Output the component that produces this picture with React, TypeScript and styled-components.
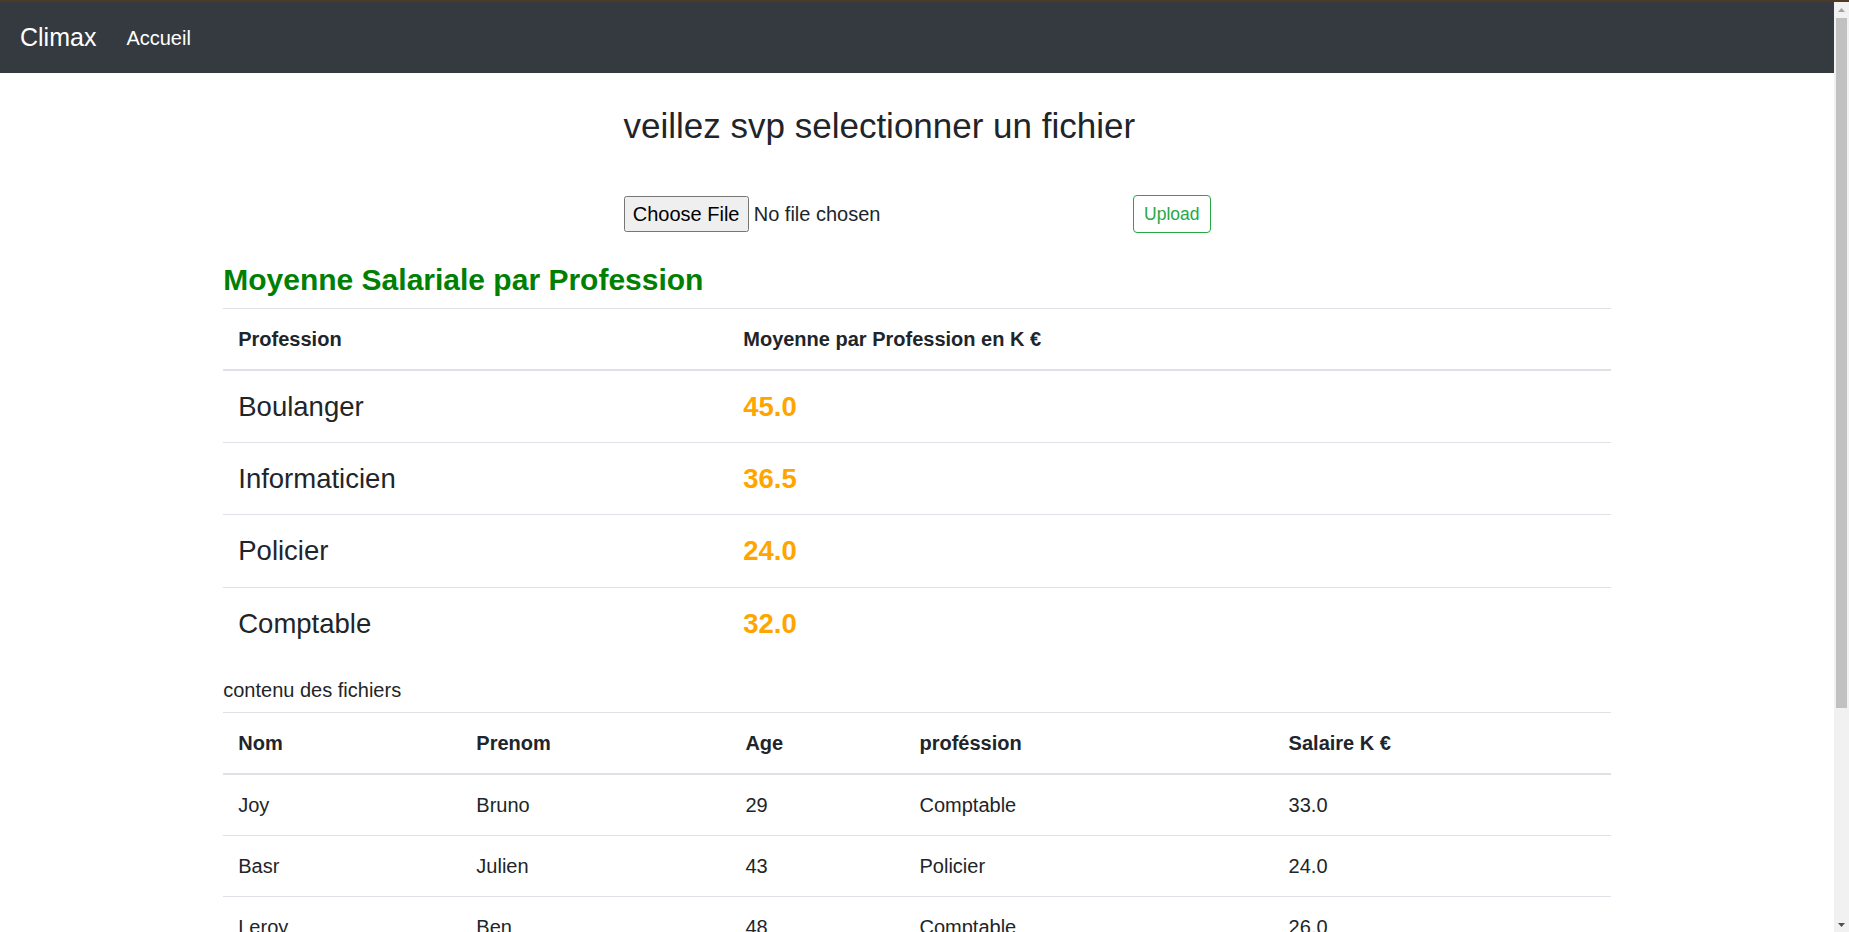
import React from "react";
import styled, { createGlobalStyle } from "styled-components";

const GlobalStyle = createGlobalStyle`
  html, body {
    margin: 0;
    padding: 0;
  }
  body {
    font-family: "Liberation Sans", Arial, sans-serif;
    font-size: 20px;
    line-height: 1.5;
    color: #212529;
    background: #ffffff;
  }
  *, *::before, *::after {
    box-sizing: border-box;
  }
`;

const TopStrip = styled.div`
  height: 2px;
  background: #4e3a24;
`;

const Frame = styled.div`
  display: grid;
  grid-template-columns: 1fr 15px;
  align-items: start;
`;

const Page = styled.div`
  min-width: 0;
`;

const ScrollRail = styled.div`
  position: sticky;
  top: 0;
  height: 930px;
  display: flex;
  flex-direction: column;
  align-items: center;
  background: #f1f1f1;
`;

const RailArrow = styled.div`
  display: flex;
  align-items: center;
  justify-content: center;
  width: 15px;
  height: 15px;
  flex: none;
`;

const RailTrack = styled.div`
  flex: 1;
  width: 100%;
  padding: 1px 2px 0;
`;

const RailThumb = styled.div`
  height: 690px;
  background: #c1c1c1;
`;

const NavBar = styled.nav`
  display: flex;
  align-items: center;
  padding: 10.5px 20px;
  background: #343a40;
`;

const Brand = styled.a`
  font-size: 25px;
  line-height: 37.5px;
  padding: 6.25px 0;
  margin-right: 20px;
  color: #ffffff;
  text-decoration: none;
`;

const NavLink = styled.a`
  padding: 10px;
  font-size: 20px;
  line-height: 30px;
  color: #ffffff;
  text-decoration: none;
`;

const Container = styled.main`
  max-width: 1425px;
  margin: 0 auto;
  padding: 0 18.75px;
`;

const UploadBlock = styled.section`
  width: 587px;
  margin: 31.5px auto 0;
`;

const PromptTitle = styled.h3`
  margin: 0 0 10px;
  font-size: 35px;
  font-weight: 500;
  line-height: 1.2;
`;

const UploadForm = styled.form`
  display: flex;
  align-items: center;
  margin-top: 48px;
`;

const FilePicker = styled.label`
  display: flex;
  align-items: center;
  width: 510px;
  cursor: pointer;
`;

const HiddenInput = styled.input`
  display: none;
`;

const ChooseButton = styled.span`
  display: inline-block;
  height: 36px;
  padding: 0 8.25px;
  line-height: 34px;
  font-size: 20px;
  color: #000000;
  background: #efefef;
  border: 1px solid #767676;
  border-radius: 2.5px;
`;

const FileName = styled.span`
  margin-left: 5px;
  font-size: 20px;
`;

const UploadButton = styled.button`
  font-family: inherit;
  font-size: 17.5px;
  line-height: 1.5;
  padding: 5px 10px;
  color: #28a745;
  background: transparent;
  border: 1px solid #28a745;
  border-radius: 4px;
  cursor: pointer;
`;

const SectionTitle = styled.h4`
  margin: 29px 0 10px;
  font-size: 30px;
  font-weight: 700;
  line-height: 1.2;
  color: #008000;
`;

const DataTable = styled.table<{ $gap: number }>`
  width: 100%;
  border-collapse: collapse;
  margin-bottom: ${(p) => p.$gap}px;
`;

const HeadCell = styled.th`
  padding: 15px;
  text-align: left;
  vertical-align: bottom;
  font-size: 20px;
  line-height: 30px;
  font-weight: 700;
  border-top: 1px solid #dee2e6;
  border-bottom: 2px solid #dee2e6;
`;

const Cell = styled.td<{ $size: number; $accent?: boolean }>`
  padding: 15px;
  vertical-align: top;
  font-size: ${(p) => p.$size}px;
  line-height: 1.5;
  font-weight: ${(p) => (p.$accent ? 700 : 400)};
  color: ${(p) => (p.$accent ? "#ffa500" : "#212529")};
  border-top: 1px solid #dee2e6;
`;

const FilesLabel = styled.p`
  margin: 0 0 7px;
  font-size: 20px;
  line-height: 30px;
`;

const averages = [
  { profession: "Boulanger", value: "45.0" },
  { profession: "Informaticien", value: "36.5" },
  { profession: "Policier", value: "24.0" },
  { profession: "Comptable", value: "32.0" },
];

const people = [
  ["Joy", "Bruno", "29", "Comptable", "33.0"],
  ["Basr", "Julien", "43", "Policier", "24.0"],
  ["Leroy", "Ben", "48", "Comptable", "26.0"],
  ["Martin", "Paul", "35", "Boulanger", "45.0"],
  ["Durand", "Marie", "31", "Informaticien", "35.0"],
  ["Petit", "Luc", "27", "Informaticien", "38.0"],
  ["Moreau", "Anne", "39", "Comptable", "37.0"],
];

const peopleCols = [238, 269, 174, 369, 337];

export default function App() {
  return (
    <>
      <GlobalStyle />
      <TopStrip />
      <Frame>
        <Page>
          <NavBar>
            <Brand href="#">Climax</Brand>
            <NavLink href="#">Accueil</NavLink>
          </NavBar>
          <Container>
            <UploadBlock>
              <PromptTitle>veillez svp selectionner un fichier</PromptTitle>
              <UploadForm onSubmit={(e) => e.preventDefault()}>
                <FilePicker>
                  <HiddenInput type="file" />
                  <ChooseButton>Choose File</ChooseButton>
                  <FileName>No file chosen</FileName>
                </FilePicker>
                <UploadButton type="submit">Upload</UploadButton>
              </UploadForm>
            </UploadBlock>

            <SectionTitle>Moyenne Salariale par Profession</SectionTitle>
            <DataTable $gap={16}>
              <colgroup>
                <col style={{ width: 505 }} />
                <col />
              </colgroup>
              <thead>
                <tr>
                  <HeadCell>Profession</HeadCell>
                  <HeadCell>Moyenne par Profession en K €</HeadCell>
                </tr>
              </thead>
              <tbody>
                {averages.map((a) => (
                  <tr key={a.profession}>
                    <Cell $size={27.5}>{a.profession}</Cell>
                    <Cell $size={27.5} $accent>
                      {a.value}
                    </Cell>
                  </tr>
                ))}
              </tbody>
            </DataTable>

            <FilesLabel>contenu des fichiers</FilesLabel>
            <DataTable $gap={20}>
              <colgroup>
                {peopleCols.map((w, i) => (
                  <col key={i} style={{ width: w }} />
                ))}
              </colgroup>
              <thead>
                <tr>
                  <HeadCell>Nom</HeadCell>
                  <HeadCell>Prenom</HeadCell>
                  <HeadCell>Age</HeadCell>
                  <HeadCell>proféssion</HeadCell>
                  <HeadCell>Salaire K €</HeadCell>
                </tr>
              </thead>
              <tbody>
                {people.map((row, i) => (
                  <tr key={i}>
                    {row.map((v, j) => (
                      <Cell key={j} $size={20}>
                        {v}
                      </Cell>
                    ))}
                  </tr>
                ))}
              </tbody>
            </DataTable>
          </Container>
        </Page>
        <ScrollRail aria-hidden>
          <RailArrow>
            <svg width="7" height="4" viewBox="0 0 7 4">
              <polygon points="3.5,0 7,4 0,4" fill="#a3a3a3" />
            </svg>
          </RailArrow>
          <RailTrack>
            <RailThumb />
          </RailTrack>
          <RailArrow>
            <svg width="7" height="4" viewBox="0 0 7 4">
              <polygon points="0,0 7,0 3.5,4" fill="#505050" />
            </svg>
          </RailArrow>
        </ScrollRail>
      </Frame>
    </>
  );
}
